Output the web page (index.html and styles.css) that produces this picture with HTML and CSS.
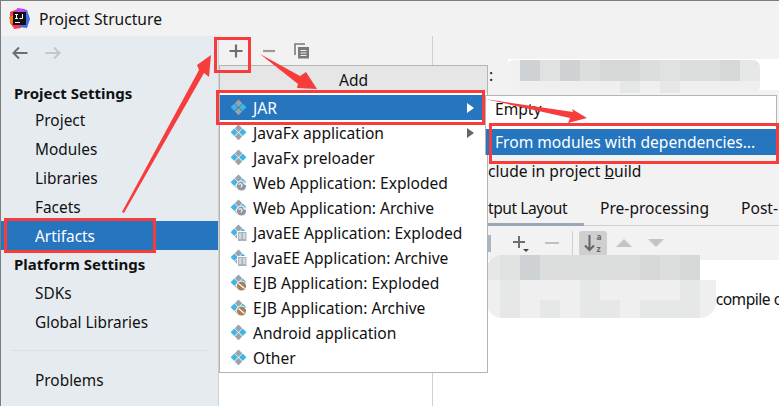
FILE: index.html
```html
<!DOCTYPE html>
<html lang="en">
<head>
<meta charset="utf-8">
<title>Project Structure</title>
<link rel="stylesheet" href="styles.css">
</head>
<body>
<svg class="defs" width="0" height="0">
  <defs>
    <g id="diamonds">
      <path d="M8.500.5l3.700 3.700-3.700 3.700-3.700-3.700z" fill="#9aa3ab"/>
      <path d="M8.500 8.800l3.700 3.700-3.700 3.700-3.700-3.700z" fill="#9aa3ab"/>
      <path d="M4.300 4.600L8 8.300 4.300 12 .6 8.300z" fill="#40b6e0"/>
      <path d="M12.700 4.600l3.700 3.700-3.700 3.700L9 8.300z" fill="#40b6e0"/>
    </g>
    <g id="web">
      <use href="#diamonds"/>
      <circle cx="11.500" cy="12" r="5.400" fill="#fff"/>
      <circle cx="11.500" cy="12" r="4.600" fill="#8d979f"/>
      <path d="M8.500 10.500c2-1.500 3-.5 3.500.5s-1 1-1 2.500M13 8.500c1 1.500 2 2 3 2" stroke="#fff" stroke-width="1.100" fill="none"/>
    </g>
    <g id="ee">
      <use href="#diamonds"/>
      <rect x="7" y="7" width="10" height="10" fill="#fff"/>
      <rect x="8" y="8" width="8.500" height="9" fill="#a8b2ba"/>
      <path d="M9 10h2.500M9 12h2.500M9 14h2.500M13 10h2.500M13 12h2.500M13 14h2.500" stroke="#fff" stroke-width="1"/>
    </g>
    <g id="ejb">
      <use href="#diamonds"/>
      <circle cx="11.500" cy="12" r="5.400" fill="#fff"/>
      <circle cx="11.500" cy="12" r="4.600" fill="#a9805c"/>
      <path d="M8.500 9.500l6 5" stroke="#fff" stroke-width="1.100"/>
    </g>
  </defs>
</svg>

<div class="window">
  <header class="titlebar">
    <svg class="logo" width="21" height="21" viewBox="0 0 21 21">
      <path d="M1 4l8-3 3 6-8 12-3-4z" fill="#fe315d"/>
      <path d="M0 9l5-2 1 8-4 1z" fill="#f97a12"/>
      <path d="M10 1l8 1 3 9-3 9-9-1z" fill="#3f6fe8"/>
      <path d="M8 0l8 1 1 5-9 1z" fill="#b74af7"/>
      <path d="M3 16l8-2 1 6-7 1z" fill="#fe315d"/>
      <rect x="4" y="4" width="13" height="13" fill="#111"/>
      <rect x="6" y="14" width="5" height="1" fill="#fff"/>
      <rect x="6" y="6" width="3" height="1" fill="#fff"/>
      <rect x="7" y="6" width="1" height="5" fill="#fff"/>
      <rect x="6" y="10" width="3" height="1" fill="#fff"/>
      <path d="M13.500 6v4.500h-3" stroke="#fff" stroke-width="1" fill="none"/>
    </svg>
    <span class="title">Project Structure</span>
  </header>
  <div class="columns">
    <nav class="sidebar">
      <div class="history">
        <svg width="18" height="14" viewBox="0 0 18 14"><path d="M16.500 7H2.500M8 1.500L2.500 7 8 12.500" stroke="#6e6e6e" stroke-width="2" fill="none"/></svg>
        <svg width="18" height="14" viewBox="0 0 18 14"><path d="M1.500 7h14M10 1.500L15.500 7 10 12.500" stroke="#c4c7ca" stroke-width="2" fill="none"/></svg>
      </div>
      <h2 class="nav-head nav-head-first">Project Settings</h2>
      <a class="nav-item">Project</a>
      <a class="nav-item">Modules</a>
      <a class="nav-item">Libraries</a>
      <a class="nav-item">Facets</a>
      <a class="nav-item nav-selected">Artifacts</a>
      <h2 class="nav-head">Platform Settings</h2>
      <a class="nav-item">SDKs</a>
      <a class="nav-item">Global Libraries</a>
      <hr class="nav-sep">
      <a class="nav-item">Problems</a>
    </nav>
    <section class="list-pane">
      <div class="list-tools">
        <svg width="16" height="16" viewBox="0 0 16 16"><path d="M8 1.500v13M1.500 8h13" stroke="#6e6e6e" stroke-width="2.200"/></svg>
        <svg width="16" height="16" viewBox="0 0 16 16"><path d="M2 8h12" stroke="#9a9a9a" stroke-width="2.200"/></svg>
        <svg width="16" height="16" viewBox="0 0 16 16"><path d="M1 12V1h10" stroke="#7a7a7a" stroke-width="1.600" fill="none"/><rect x="4" y="4" width="11" height="11.500" fill="#7a7a7a"/><path d="M6.500 7.500h6M6.500 10h6M6.500 12.500h6" stroke="#f2f2f2" stroke-width="1"/></svg>
      </div>
      <div class="list-body"></div>
    </section>
    <section class="detail">
      <div class="detail-top">
        <div class="name-row"><span class="colon">:</span><span class="name-input"></span></div>
        <div class="include-row">clude in project <span class="mnemonic">b</span>uild</div>
        <div class="tabs">
          <span class="tab tab-active">tput Layout</span>
          <span class="tab tab-pre">Pre-processing</span>
          <span class="tab tab-post">Post-</span>
        </div>
        <div class="detail-tools">
          <span class="tool-stub"></span>
          <span class="tool-add">
            <svg width="18" height="20" viewBox="0 0 18 20"><path d="M7 3v12M1 9h12" stroke="#6e6e6e" stroke-width="2"/><path d="M11 16h6l-3 3z" fill="#444"/></svg>
          </span>
          <svg class="tool-minus" width="14" height="4" viewBox="0 0 14 4"><path d="M0 2h14" stroke="#c0c0c0" stroke-width="2"/></svg>
          <span class="tool-sep"></span>
          <span class="tool-sort">
            <svg width="11" height="20" viewBox="0 0 11 20"><path d="M5.500 2v15M1 12.500L5.500 17l4.500-4.500" stroke="#666" stroke-width="2" fill="none"/></svg>
            <span class="sort-letters">a<br>z</span>
          </span>
          <svg class="tool-tri" width="16" height="9" viewBox="0 0 16 9"><path d="M8 0l8 8H0z" fill="#c4c4c4"/></svg>
          <svg class="tool-tri" width="16" height="9" viewBox="0 0 16 9"><path d="M0 0h16L8 8z" fill="#c4c4c4"/></svg>
        </div>
      </div>
      <div class="detail-body"><span class="compile">.compile o</span></div>
    </section>
  </div>

  <div class="mosaic mosaic-name">
    <i class="m6"></i><i class="m3"></i><i class="m7"></i><i class="m3"></i><i class="m2"></i><i class="m1"></i><i class="m1"></i><i class="m2"></i><i class="m7"></i><i class="m2"></i><i class="m2"></i><i class="m1"></i><i class="m4"></i>
    <i class="m6"></i><i class="m5"></i><i class="m5"></i><i class="m5"></i><i class="m5"></i><i class="m5"></i><i class="m4"></i><i class="m5"></i><i class="m4"></i><i class="m5"></i><i class="m5"></i><i class="m5"></i><i class="m5"></i>
  </div>
  <div class="mosaic mosaic-tree">
    <i class="m4"></i><i class="m7"></i><i class="m3"></i><i class="m2"></i><i class="m2"></i><i class="m2"></i><i class="m2"></i><i class="m2"></i><i class="m1"></i><i class="m2"></i><i class="m1"></i><i class="m0"></i>
    <i class="m5"></i><i class="m4"></i><i class="m5"></i><i class="m5"></i><i class="m5"></i><i class="m4"></i><i class="m5"></i><i class="m5"></i><i class="m5"></i><i class="m5"></i><i class="m4"></i><i class="m5"></i>
    <i class="m5"></i><i class="m4"></i><i class="m5"></i><i class="m4"></i><i class="m5"></i><i class="m4"></i><i class="m4"></i><i class="m5"></i><i class="m4"></i><i class="m4"></i><i class="m4"></i><i class="m5"></i>
  </div>

  <div class="popup popup-add">
    <div class="popup-head">Add</div>
    <div class="row row-selected"><svg class="ico" viewBox="0 0 17 17"><use href="#diamonds"/></svg><span class="row-label">JAR</span><span class="chev chev-white"></span></div>
    <div class="row"><svg class="ico" viewBox="0 0 17 17"><use href="#diamonds"/></svg><span class="row-label">JavaFx application</span><span class="chev"></span></div>
    <div class="row"><svg class="ico" viewBox="0 0 17 17"><use href="#diamonds"/></svg><span class="row-label">JavaFx preloader</span></div>
    <div class="row"><svg class="ico" viewBox="0 0 17 17"><use href="#web"/></svg><span class="row-label">Web Application: Exploded</span></div>
    <div class="row"><svg class="ico" viewBox="0 0 17 17"><use href="#web"/></svg><span class="row-label">Web Application: Archive</span></div>
    <div class="row"><svg class="ico" viewBox="0 0 17 17"><use href="#ee"/></svg><span class="row-label">JavaEE Application: Exploded</span></div>
    <div class="row"><svg class="ico" viewBox="0 0 17 17"><use href="#ee"/></svg><span class="row-label">JavaEE Application: Archive</span></div>
    <div class="row"><svg class="ico" viewBox="0 0 17 17"><use href="#ejb"/></svg><span class="row-label">EJB Application: Exploded</span></div>
    <div class="row"><svg class="ico" viewBox="0 0 17 17"><use href="#ejb"/></svg><span class="row-label">EJB Application: Archive</span></div>
    <div class="row"><svg class="ico" viewBox="0 0 17 17"><use href="#diamonds"/></svg><span class="row-label">Android application</span></div>
    <div class="row"><svg class="ico" viewBox="0 0 17 17"><use href="#diamonds"/></svg><span class="row-label">Other</span></div>
  </div>

  <div class="popup popup-jar">
    <div class="sub-row">Empty</div>
    <div class="sub-row sub-selected">From modules with dependencies...</div>
  </div>

  <svg class="marks" width="779" height="406" viewBox="0 0 779 406">
    <g fill="none" stroke="#f73c3c" stroke-width="3">
      <rect x="215.500" y="38.500" width="34" height="33"/>
      <rect x="217.500" y="91.500" width="266" height="32"/>
      <rect x="490.500" y="124.500" width="287" height="38"/>
      <rect x="5.500" y="219.500" width="149" height="32"/>
    </g>
    <g fill="#f73c3c">
      <path d="M122 212L199 70 197 65 211 55 209 77 204 73 124 213z"/>
      <path d="M260 54L300 76 306 72 317 89 297 88 298 84z"/>
      <path d="M485 99L573 112 572 109 587 118 568 123 570 118z"/>
    </g>
  </svg>
</div>
</body>
</html>
```
FILE: styles.css
```css
* { box-sizing: border-box; }
html, body { margin: 0; padding: 0; }
body {
  width: 779px;
  height: 406px;
  overflow: hidden;
  font-family: "Noto Sans", "Open Sans", sans-serif;
  font-size: 15.6px;
  color: #111;
  background: #f2f2f2;
}
.defs { display: block; height: 0; }
.window {
  position: relative;
  width: 779px;
  height: 406px;
  overflow: hidden;
  border-top: 1px solid #7c7c7c;
  border-left: 1px solid #7c7c7c;
  display: flex;
  flex-direction: column;
}
.titlebar {
  height: 35px;
  flex: none;
  display: flex;
  align-items: center;
  padding-left: 8px;
  gap: 9px;
  background: #f2f2f2;
}
.title { font-size: 15.6px; }
.columns { flex: 1; display: flex; min-height: 0; }

.sidebar {
  width: 217px;
  flex: none;
  background: #e6ebf0;
  display: flex;
  flex-direction: column;
  font-size: 15.4px;
}
.history {
  height: 34px;
  flex: none;
  display: flex;
  align-items: center;
  gap: 15px;
  padding-left: 10px;
  margin-bottom: 12px;
}
.nav-head {
  margin: 0;
  flex: none;
  height: 28px;
  line-height: 28px;
  padding-left: 13px;
  font-size: 15px;
  font-weight: 700;
}
.nav-head-first { height: 23px; line-height: 23px; }
.nav-item {
  display: block;
  flex: none;
  height: 29px;
  line-height: 31px;
  padding-left: 34px;
}
.nav-selected { background: #2675bf; color: #fff; }
.nav-sep {
  flex: none;
  margin: 14px 10px;
  border: 0;
  height: 1px;
  background: #dcdfe3;
}

.list-pane {
  width: 215px;
  flex: none;
  display: flex;
  flex-direction: column;
  border-left: 1px solid #d0d0d0;
  border-right: 1px solid #d0d0d0;
}
.list-tools {
  height: 29px;
  flex: none;
  display: flex;
  align-items: center;
  gap: 17px;
  padding-left: 9px;
  background: #f2f2f2;
}
.list-body { flex: 1; background: #fff; }

.detail { flex: 1; display: flex; flex-direction: column; min-width: 0; }
.detail-top { height: 224px; flex: none; background: #f2f2f2; display: flex; flex-direction: column; }
.name-row { height: 80px; flex: none; display: flex; padding-left: 56px; gap: 15px; }
.colon { line-height: 20px; margin-top: 29px; }
.name-input { flex: 1; height: 31px; margin-top: 23px; background: #fff; }
.include-row { flex: none; padding: 45px 0 0 55px; height: 70px; line-height: 20px; white-space: nowrap; }
.mnemonic { text-decoration: underline; }
.tabs {
  flex: none;
  display: flex;
  white-space: nowrap;
  height: 40px;
  padding-left: 55px;
  border-bottom: 1px solid #d0d0d0;
  line-height: 44px;
}
.tab { display: block; }
.tab-active { width: 96px; border-bottom: 3px solid #9aa7b8; height: 40px; letter-spacing: -.45px; }
.tab-pre { margin-left: 16px; }
.tab-post { margin-left: 32px; }
.detail-tools {
  flex: 1;
  display: flex;
  align-items: center;
  padding-left: 54px;
}
.tool-stub { width: 4px; height: 17px; background: #a7b7c4; }
.tool-add { display: flex; margin-left: 21px; }
.tool-minus { margin-left: 15px; }
.tool-sep { width: 1px; height: 24px; background: #cfcfcf; margin-left: 13px; }
.tool-sort {
  width: 28px;
  height: 25px;
  margin-left: 6px;
  display: flex;
  align-items: center;
  justify-content: center;
  gap: 1px;
  border-radius: 3px;
  background: #cfcfcf;
}
.sort-letters { display: block; font-size: 8.5px; line-height: 11.6px; font-weight: 700; color: #666; }
.tool-tri { margin-left: 9px; }
.tool-tri + .tool-tri { margin-left: 16px; }
.detail-body { flex: 1; background: #fff; padding: 29px 0 0 279px; white-space: nowrap; line-height: 20px; overflow: hidden; }
.compile { display: block; letter-spacing: -.5px; }

.mosaic { position: absolute; display: grid; }
.mosaic i { display: block; }
.mosaic-name {
  left: 506px;
  top: 59px;
  grid-template-columns: 13px repeat(12, 20px);
  grid-template-rows: 21px 12px;
  border-radius: 7px;
  overflow: hidden;
}
.mosaic-tree {
  left: 485px;
  top: 254px;
  grid-template-columns: 14px repeat(10, 20px) 16px;
  grid-template-rows: 25px 20px 18px;
  border-radius: 16px;
  overflow: hidden;
}
.m0 { background: transparent; }
.m1 { background: #d6d8d8; }
.m2 { background: #dcdddd; }
.m3 { background: #cfd2d4; }
.m4 { background: #e6e7e7; }
.m5 { background: #efefef; }
.m6 { background: #f1f1f1; }
.m7 { background: #e0e1e1; }

.popup {
  position: absolute;
  background: #fff;
  border: 1px solid #b4b4b4;
}
.popup-add { left: 218px; top: 64px; width: 269px; height: 308px; }
.popup-head {
  height: 27px;
  line-height: 28px;
  text-align: center;
  background: #e6e6e6;
}
.row {
  height: 25px;
  display: flex;
  align-items: center;
  padding-left: 10px;
  white-space: nowrap;
  position: relative;
  top: 2px;
}
.row-selected { background: #2675bf; color: #fff; }
.ico { width: 17px; height: 17px; flex: none; margin-right: 6px; }
.row-label { flex: 1; }
.chev {
  width: 0;
  height: 0;
  margin-right: 13px;
  border-left: 7px solid #666;
  border-top: 5px solid transparent;
  border-bottom: 5px solid transparent;
}
.chev-white { border-left-color: #fff; }

.popup-jar { left: 484px; top: 94px; width: 292px; height: 60px; }
.sub-row { height: 33px; padding-left: 9px; line-height: 27px; white-space: nowrap; }
.sub-selected { height: 26px; line-height: 26px; background: #2675bf; color: #fff; }

.marks { position: absolute; left: -1px; top: -1px; pointer-events: none; }
```
